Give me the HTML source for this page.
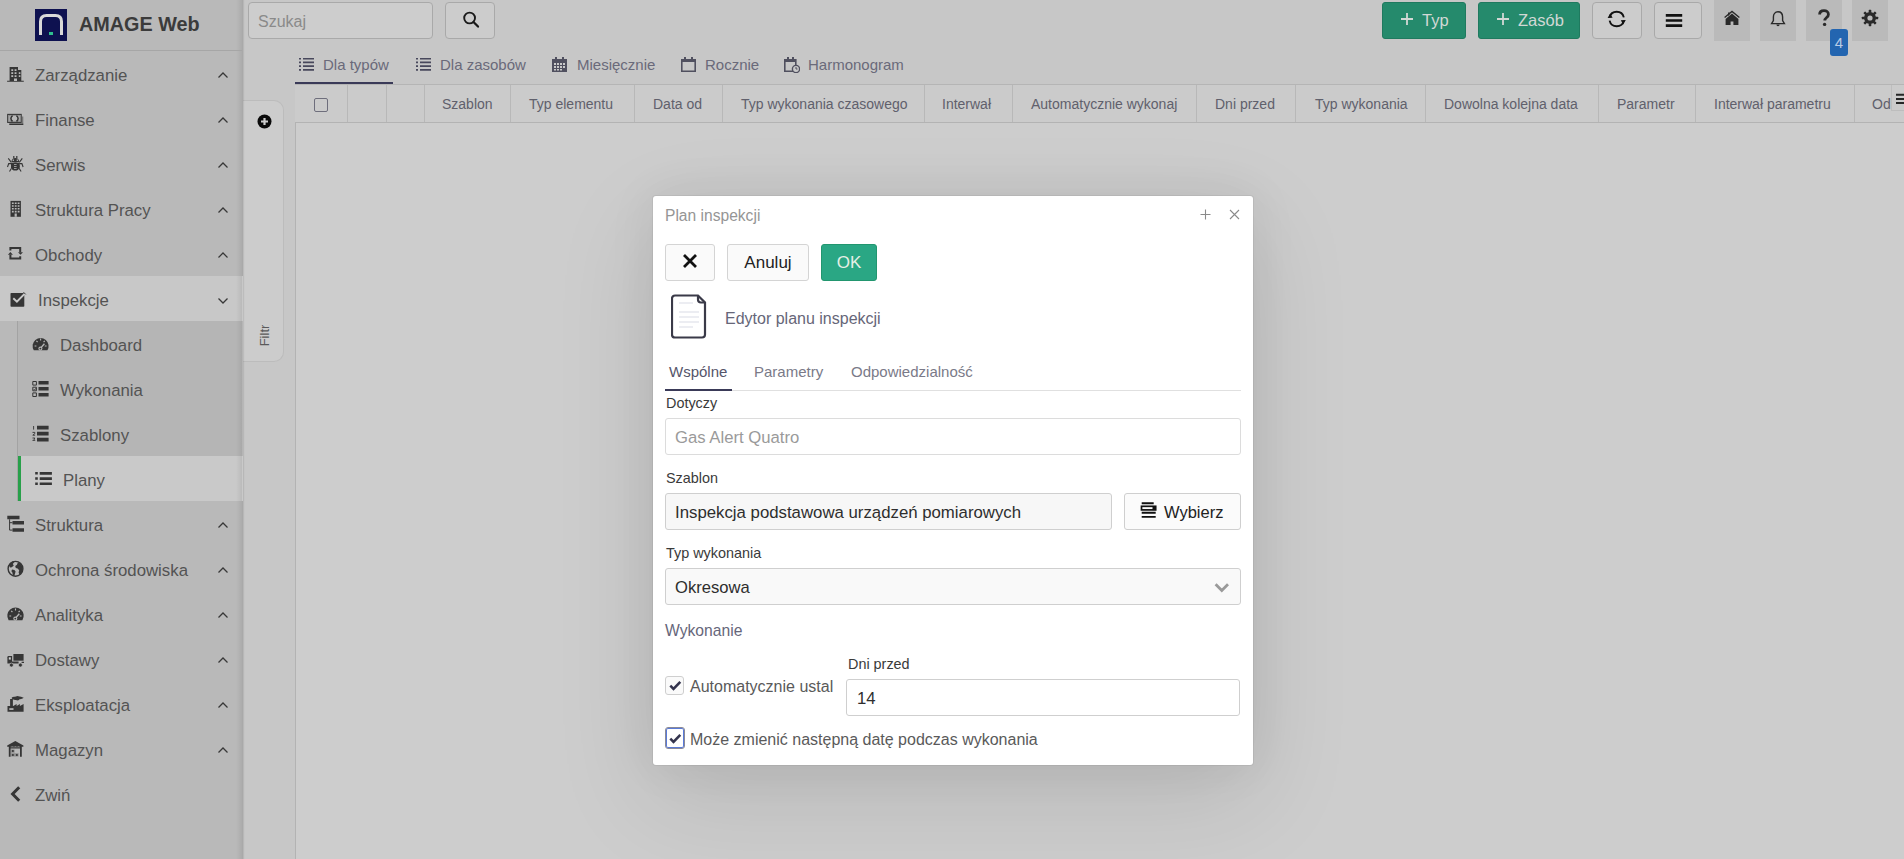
<!DOCTYPE html><html><head><meta charset="utf-8"><style>
*{box-sizing:border-box;margin:0;padding:0}
html,body{width:1904px;height:859px;overflow:hidden;background:#c7c7c7;font-family:"Liberation Sans",sans-serif;color:#444}
div,span,svg{position:absolute}
.n{white-space:nowrap}
</style></head><body>
<div style="left:248px;top:2px;width:185px;height:37px;border:1px solid #a9a9a9;border-radius:4px;background:#cdcdcd"></div>
<span class="n" style="left:258px;top:13px;font-size:16px;color:#8a8a8a">Szukaj</span>
<div style="left:445px;top:2px;width:50px;height:37px;border:1px solid #a9a9a9;border-radius:4px;background:#cccccc"><svg width="20" height="20" viewBox="0 0 20 20" style="left:16px;top:7px"><circle cx="7.6" cy="8" r="5.4" fill="none" stroke="#1a1a1a" stroke-width="1.9"/><path d="M11.5 12l4.5 4.6" stroke="#1a1a1a" stroke-width="2.2" stroke-linecap="round"/></svg></div>
<div style="left:1382px;top:2px;width:84px;height:37px;background:#258a6c;border:1px solid #1f7a5f;border-radius:3px"></div>
<svg width="12" height="12" viewBox="0 0 12 12" style="left:1401px;top:13px"><path d="M6 0v12M0 6h12" stroke="#d2d8d5" stroke-width="1.8"/></svg>
<span class="n" style="left:1422px;top:11px;font-size:16.5px;color:#d2d8d5">Typ</span>
<div style="left:1478px;top:2px;width:102px;height:37px;background:#258a6c;border:1px solid #1f7a5f;border-radius:3px"></div>
<svg width="12" height="12" viewBox="0 0 12 12" style="left:1497px;top:13px"><path d="M6 0v12M0 6h12" stroke="#d2d8d5" stroke-width="1.8"/></svg>
<span class="n" style="left:1518px;top:11px;font-size:16.5px;color:#d2d8d5">Zasób</span>
<div style="left:1592px;top:2px;width:50px;height:37px;border:1px solid #a9a9a9;border-radius:4px;background:#cccccc"></div>
<svg width="20" height="20" viewBox="0 0 20 20" style="left:1607px;top:9px"><path d="M2.6 8.4A7.3 7.3 0 0 1 16.8 8.4M16.8 11.6A7.3 7.3 0 0 1 2.6 11.6" fill="none" stroke="#111" stroke-width="1.9"/><path d="M0.6 9l2.6-4.4 2.4 4.2z M18.8 11l-2.6 4.4-2.4-4.2z" fill="#111"/></svg>
<div style="left:1654px;top:2px;width:48px;height:37px;border:1px solid #a9a9a9;border-radius:4px;background:#cccccc"><svg width="20" height="20" viewBox="0 0 20 20" style="left:10px;top:6px"><path d="M0.8 6.4h16.4M0.8 11.5h16.4M0.8 16.6h16.4" stroke="#111" stroke-width="2.6"/></svg></div>
<div style="left:1714px;top:0;width:36px;height:41px;background:#bababa"></div>
<div style="left:1760px;top:0;width:36px;height:41px;background:#bababa"></div>
<div style="left:1806px;top:0;width:36px;height:41px;background:#bababa"></div>
<div style="left:1852px;top:0;width:36px;height:41px;background:#bababa"></div>
<svg width="18" height="18" viewBox="0 0 18 18" style="left:1723px;top:9px"><path d="M1.6 8.6L9 2.4l7.4 6.2" fill="none" stroke="#2a2a2a" stroke-width="1.3"/><path d="M5 3.5h1.6v2.2L5 7z" fill="#2a2a2a"/><path d="M9 4.6l-6.4 5.3V16h5V12.6h2.8V16h5V9.9z" fill="#2a2a2a"/></svg>
<svg width="18" height="18" viewBox="0 0 18 18" style="left:1769px;top:10px"><path d="M9 1.8c-3 0-4.6 2.4-4.6 5.2v3.6L2.6 13.6h12.8L13.6 10.6V7c0-2.8-1.6-5.2-4.6-5.2z" fill="none" stroke="#2a2a2a" stroke-width="1.4"/><path d="M7.4 14.6a1.6 1.6 0 0 0 3.2 0z" fill="#2a2a2a"/></svg>
<svg width="14" height="18" viewBox="0 0 14 18" style="left:1817px;top:9px"><path d="M2.6 5.6C2.6 3 4.6 1.6 7 1.6s4.4 1.4 4.4 3.8c0 3.2-3.6 3-3.6 6.2" fill="none" stroke="#2a2a2a" stroke-width="2.8"/><circle cx="7.6" cy="15.4" r="1.7" fill="#2a2a2a"/></svg>
<svg width="18" height="18" viewBox="-9 -9 18 18" style="left:1861px;top:9px"><circle r="6" fill="#2a2a2a"/><rect x="-1.3" y="-8.2" width="2.6" height="3" rx=".6" fill="#2a2a2a" transform="rotate(0)"/><rect x="-1.3" y="-8.2" width="2.6" height="3" rx=".6" fill="#2a2a2a" transform="rotate(45)"/><rect x="-1.3" y="-8.2" width="2.6" height="3" rx=".6" fill="#2a2a2a" transform="rotate(90)"/><rect x="-1.3" y="-8.2" width="2.6" height="3" rx=".6" fill="#2a2a2a" transform="rotate(135)"/><rect x="-1.3" y="-8.2" width="2.6" height="3" rx=".6" fill="#2a2a2a" transform="rotate(180)"/><rect x="-1.3" y="-8.2" width="2.6" height="3" rx=".6" fill="#2a2a2a" transform="rotate(225)"/><rect x="-1.3" y="-8.2" width="2.6" height="3" rx=".6" fill="#2a2a2a" transform="rotate(270)"/><rect x="-1.3" y="-8.2" width="2.6" height="3" rx=".6" fill="#2a2a2a" transform="rotate(315)"/><circle r="2.6" fill="#bababa"/></svg>
<div style="left:1830px;top:29px;width:18px;height:27px;background:#2365b0;border-radius:3px"></div>
<span class="n" style="left:1830px;top:34px;width:18px;text-align:center;font-size:15px;color:#b9cce6">4</span>
<svg width="16" height="16" viewBox="0 0 16 16" style="left:299px;top:57px"><path d="M0 .9h2v1.7H0zM4 .9h11v1.7H4zM0 4.6h2v1.7H0zM4 4.6h11v1.7H4zM0 8.3h2v1.7H0zM4 8.3h11v1.7H4zM0 12h2v1.7H0zM4 12h11v1.7H4z" fill="#48485c"/></svg>
<span class="n" style="left:323px;top:56px;font-size:15px;color:#6a6a7a">Dla typów</span>
<svg width="16" height="16" viewBox="0 0 16 16" style="left:416px;top:57px"><path d="M0 .9h2v1.7H0zM4 .9h11v1.7H4zM0 4.6h2v1.7H0zM4 4.6h11v1.7H4zM0 8.3h2v1.7H0zM4 8.3h11v1.7H4zM0 12h2v1.7H0zM4 12h11v1.7H4z" fill="#48485c"/></svg>
<span class="n" style="left:440px;top:56px;font-size:15px;color:#6a6a7a">Dla zasobów</span>
<svg width="16" height="16" viewBox="0 0 16 16" style="left:552px;top:57px"><path d="M0 2h15v13H0z" fill="#50505f"/><path d="M3 0h2v3H3zM10 0h2v3h-2z" fill="#50505f"/><path d="M2 6h2v2H2zM5 6h2v2H5zM8 6h2v2H8zM11 6h2v2h-2zM2 9h2v2H2zM5 9h2v2H5zM8 9h2v2H8zM11 9h2v2h-2zM2 12h2v1.5H2zM5 12h2v1.5H5zM8 12h2v1.5H8z" fill="#c9c9c9"/></svg>
<span class="n" style="left:577px;top:56px;font-size:15px;color:#6a6a7a">Miesięcznie</span>
<svg width="16" height="16" viewBox="0 0 16 16" style="left:681px;top:57px"><path d="M0.8 2.8h13.4v11.4H0.8z" fill="none" stroke="#50505f" stroke-width="1.6"/><path d="M0 2h15v3H0z M3 0h2v3H3zM10 0h2v3h-2z" fill="#50505f"/></svg>
<span class="n" style="left:705px;top:56px;font-size:15px;color:#6a6a7a">Rocznie</span>
<svg width="16" height="16" viewBox="0 0 16 16" style="left:784px;top:57px"><path d="M0.8 2.8h11v11.4H0.8z" fill="none" stroke="#50505f" stroke-width="1.6"/><path d="M0 2h12v3H0z M3 0h2v3H3zM8 0h2v3H8z" fill="#50505f"/><circle cx="12" cy="12" r="3.6" fill="#c9c9c9" stroke="#50505f" stroke-width="1.4"/><path d="M12 10v2h1.5" fill="none" stroke="#50505f" stroke-width="1"/></svg>
<span class="n" style="left:808px;top:56px;font-size:15px;color:#6a6a7a">Harmonogram</span>
<div style="left:295px;top:82px;width:98px;height:2px;background:#3a3a58"></div>
<div style="left:243px;top:100px;width:41px;height:262px;background:#cccccc;border:1px solid #bcbcbc;border-left:none;border-radius:0 10px 10px 0"></div>
<svg width="15" height="15" viewBox="0 0 15 15" style="left:257px;top:114px"><circle cx="7.5" cy="7.5" r="7" fill="#0a0a0a"/><path d="M7.5 4v7M4 7.5h7" stroke="#cdcdcd" stroke-width="2.2"/></svg>
<span class="n" style="left:253.5px;top:327.5px;font-size:13px;color:#5a5a5a;transform:rotate(-90deg);transform-origin:center">Filtr</span>
<div style="left:295px;top:84px;width:1609px;height:775px;border-left:1px solid #b3b3b3;background:#cdcdcd"></div>
<div style="left:295px;top:84px;width:1609px;height:39px;border-top:1px solid #b5b5b5;border-bottom:1px solid #b3b3b3;background:#cbcbcb"></div>
<div style="left:347px;top:85px;width:1px;height:37px;background:#b8b8b8"></div>
<div style="left:386px;top:85px;width:1px;height:37px;background:#b8b8b8"></div>
<div style="left:424px;top:85px;width:1px;height:37px;background:#b8b8b8"></div>
<div style="left:510px;top:85px;width:1px;height:37px;background:#b8b8b8"></div>
<div style="left:634px;top:85px;width:1px;height:37px;background:#b8b8b8"></div>
<div style="left:722px;top:85px;width:1px;height:37px;background:#b8b8b8"></div>
<div style="left:924px;top:85px;width:1px;height:37px;background:#b8b8b8"></div>
<div style="left:1012px;top:85px;width:1px;height:37px;background:#b8b8b8"></div>
<div style="left:1196px;top:85px;width:1px;height:37px;background:#b8b8b8"></div>
<div style="left:1295px;top:85px;width:1px;height:37px;background:#b8b8b8"></div>
<div style="left:1425px;top:85px;width:1px;height:37px;background:#b8b8b8"></div>
<div style="left:1598px;top:85px;width:1px;height:37px;background:#b8b8b8"></div>
<div style="left:1695px;top:85px;width:1px;height:37px;background:#b8b8b8"></div>
<div style="left:1854px;top:85px;width:1px;height:37px;background:#b8b8b8"></div>
<div style="left:314px;top:98px;width:14px;height:14px;border:1.6px solid #6e6e7c;border-radius:2px"></div>
<span class="n" style="left:442px;top:96px;font-size:14px;color:#60606c">Szablon</span>
<span class="n" style="left:529px;top:96px;font-size:14px;color:#60606c">Typ elementu</span>
<span class="n" style="left:653px;top:96px;font-size:14px;color:#60606c">Data od</span>
<span class="n" style="left:741px;top:96px;font-size:14px;color:#60606c">Typ wykonania czasowego</span>
<span class="n" style="left:942px;top:96px;font-size:14px;color:#60606c">Interwał</span>
<span class="n" style="left:1031px;top:96px;font-size:14px;color:#60606c">Automatycznie wykonaj</span>
<span class="n" style="left:1215px;top:96px;font-size:14px;color:#60606c">Dni przed</span>
<span class="n" style="left:1315px;top:96px;font-size:14px;color:#60606c">Typ wykonania</span>
<span class="n" style="left:1444px;top:96px;font-size:14px;color:#60606c">Dowolna kolejna data</span>
<span class="n" style="left:1617px;top:96px;font-size:14px;color:#60606c">Parametr</span>
<span class="n" style="left:1714px;top:96px;font-size:14px;color:#60606c">Interwał parametru</span>
<span class="n" style="left:1872px;top:96px;font-size:14px;color:#60606c">Od</span>
<div style="left:1891px;top:85px;width:13px;height:26px;background:#cbcbcb;border-left:1px solid #bdbdbd;border-bottom:1px solid #bdbdbd"></div>
<svg width="9" height="12" viewBox="0 0 9 12" style="left:1896px;top:93px"><path d="M0 1.8h9M0 5.9h9M0 9.9h9" stroke="#262626" stroke-width="2"/></svg>
<div style="left:653px;top:196px;width:600px;height:569px;background:#fff;border-radius:3px;box-shadow:0 0 0 1px rgba(0,0,0,.05),0 32px 100px 4px rgba(0,0,0,.10),0 0 50px rgba(0,0,0,.07)"></div>
<span class="n" style="left:665px;top:207px;font-size:15.6px;color:#959595">Plan inspekcji</span>
<svg width="13" height="13" viewBox="0 0 13 13" style="left:1199px;top:208px"><path d="M6.5 1.5v10M1.5 6.5h10" stroke="#8a8a8a" stroke-width="1.1"/></svg>
<svg width="12" height="12" viewBox="0 0 12 12" style="left:1228px;top:207.5px"><path d="M2 2l9 9M11 2l-9 9" stroke="#8a8a8a" stroke-width="1.1"/></svg>
<div style="left:665px;top:244px;width:50px;height:37px;border:1px solid #d4d4d4;border-radius:3px;background:#fafafa"></div>
<svg width="16" height="16" viewBox="0 0 16 16" style="left:682px;top:253px"><path d="M2 2l12 12M14 2L2 14" stroke="#111" stroke-width="2.8"/></svg>
<div style="left:727px;top:244px;width:82px;height:37px;border:1px solid #d4d4d4;border-radius:3px;background:#fafafa"></div>
<span class="n" style="left:727px;top:253px;width:82px;text-align:center;font-size:17px;color:#222">Anuluj</span>
<div style="left:821px;top:244px;width:56px;height:37px;border:1px solid #22966f;border-radius:3px;background:#2aa784"></div>
<span class="n" style="left:821px;top:253px;width:56px;text-align:center;font-size:17px;color:#e6efe6">OK</span>
<svg width="36" height="46" viewBox="0 0 36 46" style="left:671px;top:294px"><path d="M4 1.5h23l7 7v32a3 3 0 0 1-3 3H4a3 3 0 0 1-3-3v-36a3 3 0 0 1 3-3z" fill="none" stroke="#3a3a48" stroke-width="2.2"/><path d="M27 1.5v4a3 3 0 0 0 3 3h4" fill="none" stroke="#3a3a48" stroke-width="2.2"/><path d="M8 9h14M8 18h20M8 23h20M8 28h20M8 33h14" stroke="#e6e8ee" stroke-width="1.6"/></svg>
<span class="n" style="left:725px;top:310px;font-size:16px;color:#666678">Edytor planu inspekcji</span>
<span class="n" style="left:669px;top:363px;font-size:15px;color:#55556a">Wspólne</span>
<span class="n" style="left:754px;top:363px;font-size:15px;color:#7a7a88">Parametry</span>
<span class="n" style="left:851px;top:363px;font-size:15px;color:#7a7a88">Odpowiedzialność</span>
<div style="left:665px;top:390px;width:576px;height:1px;background:#e0e0e0"></div>
<div style="left:665px;top:389px;width:67px;height:2px;background:#3a3a58"></div>
<span class="n" style="left:666px;top:395px;font-size:14.4px;color:#3a3a3a">Dotyczy</span>
<div style="left:665px;top:418px;width:576px;height:37px;border:1px solid #dcdcdc;border-radius:3px;background:#fff"></div>
<span class="n" style="left:675px;top:428px;font-size:16.7px;color:#9a9a9a">Gas Alert Quatro</span>
<span class="n" style="left:666px;top:470px;font-size:14.4px;color:#3a3a3a">Szablon</span>
<div style="left:665px;top:493px;width:447px;height:37px;border:1px solid #cfcfcf;border-radius:3px;background:#f7f7f7"></div>
<span class="n" style="left:675px;top:503px;font-size:16.8px;color:#2e2e2e">Inspekcja podstawowa urządzeń pomiarowych</span>
<div style="left:1124px;top:493px;width:117px;height:37px;border:1px solid #cfcfcf;border-radius:3px;background:#fbfbfb"></div>
<svg width="18" height="18" viewBox="0 0 18 18" style="left:1140px;top:501px"><path d="M1.7 2.2h12M1.7 11.8h14M1.7 15.9h14" stroke="#111" stroke-width="1.9"/><rect x="1.5" y="5.3" width="14.2" height="3.6" fill="none" stroke="#111" stroke-width="1.7"/><rect x="12.5" y="5.1" width="3.5" height="4" fill="#111"/></svg>
<span class="n" style="left:1164px;top:503px;font-size:16.5px;color:#222">Wybierz</span>
<span class="n" style="left:666px;top:545px;font-size:14.4px;color:#3a3a3a">Typ wykonania</span>
<div style="left:665px;top:568px;width:576px;height:37px;border:1px solid #cfcfcf;border-radius:3px;background:#f9f9f9"></div>
<span class="n" style="left:675px;top:578px;font-size:16.6px;color:#2e2e2e">Okresowa</span>
<svg width="16" height="12" viewBox="0 0 16 12" style="left:1214px;top:582px"><path d="M1.6 2.2l6.2 6.2 6.2-6.2" fill="none" stroke="#9a9a9a" stroke-width="2.8"/></svg>
<span class="n" style="left:665px;top:622px;font-size:15.7px;color:#66667a">Wykonanie</span>
<span class="n" style="left:848px;top:656px;font-size:14.4px;color:#3a3a3a">Dni przed</span>
<div style="left:846px;top:679px;width:394px;height:37px;border:1px solid #cfcfcf;border-radius:3px;background:#fff"></div>
<span class="n" style="left:857px;top:689px;font-size:16.7px;color:#2e2e2e">14</span>
<div style="left:665px;top:676px;width:19px;height:19px;border:1px solid #cfcfcf;border-radius:3px;background:#fafafa"></div>
<svg width="13" height="11" viewBox="0 0 13 11" style="left:669px;top:680px"><path d="M1.3 5.6l3.2 3.2 6.8-7" fill="none" stroke="#34344e" stroke-width="2.6"/></svg>
<span class="n" style="left:690px;top:678px;font-size:16px;color:#5a5a5a">Automatycznie ustal</span>
<div style="left:665px;top:727px;width:20px;height:22px;border:1px solid #8a8a96;border-radius:3px;background:#fff;box-shadow:inset 0 0 0 1px #5a7ad8"></div>
<svg width="13" height="11" viewBox="0 0 13 11" style="left:669px;top:733px"><path d="M1.3 5.6l3.2 3.2 6.8-7" fill="none" stroke="#34344e" stroke-width="2.6"/></svg>
<span class="n" style="left:690px;top:731px;font-size:16px;color:#5a5a5a">Może zmienić następną datę podczas wykonania</span>
<div style="left:0;top:0;width:243px;height:859px;background:#b9b9b9;border-right:1px solid #a9a9a9;box-shadow:1px 0 1px rgba(0,0,0,.08)"></div>
<svg width="32" height="32" viewBox="0 0 32 32" style="left:35px;top:9px"><rect width="32" height="32" fill="#0e1150"/><path d="M5.5 26 V12.5 Q5.5 6.5 11.5 6.5 H20.5 Q26.5 6.5 26.5 12.5 V26" fill="none" stroke="#d9d9d9" stroke-width="3"/><rect x="14" y="23" width="4" height="3" fill="#2fbf8f"/></svg>
<span class="n" style="left:79px;top:13px;font-size:19.8px;font-weight:bold;color:#3b3b3b">AMAGE Web</span>
<div style="left:0;top:50px;width:242px;height:1px;background:#a6a6a6"></div>
<div style="left:236px;top:0;width:6px;height:50px;background:linear-gradient(90deg,rgba(0,0,0,0),rgba(0,0,0,.07))"></div>
<div style="left:0;top:276px;width:243px;height:45px;background:#c8c8c8"></div>
<div style="left:18px;top:321px;width:225px;height:45px;background:#b5b5b5"></div>
<div style="left:17px;top:321px;width:1px;height:45px;background:#a3a3a3"></div>
<div style="left:18px;top:366px;width:225px;height:45px;background:#b5b5b5"></div>
<div style="left:17px;top:366px;width:1px;height:45px;background:#a3a3a3"></div>
<div style="left:18px;top:411px;width:225px;height:45px;background:#b5b5b5"></div>
<div style="left:17px;top:411px;width:1px;height:45px;background:#a3a3a3"></div>
<div style="left:18px;top:456px;width:225px;height:45px;background:#c9c9c9"></div>
<div style="left:18px;top:456px;width:3px;height:45px;background:#28a04a"></div>
<div style="left:17px;top:456px;width:1px;height:45px;background:#a3a3a3"></div>
<div style="left:236px;top:51px;width:6px;height:808px;background:linear-gradient(90deg,rgba(0,0,0,0),rgba(0,0,0,.07))"></div>
<svg width="243" height="859" viewBox="0 0 243 859" style="left:0;top:0"><path d="M9.6 67H18v3.1h3.3V80.7H23.8V81.8H7.1V80.7H9.6z" fill="#363636"/><path d="M11.3 69.3h1.9v1.8h-1.9zM14.6 69.3h1.9v1.8h-1.9zM11.3 72.3h1.9v1.8h-1.9zM14.6 72.3h1.9v1.8h-1.9zM11.3 75.3h1.9v1.8h-1.9zM14.6 75.3h1.9v1.8h-1.9zM18.8 72.3h1.6v1.8h-1.6zM18.8 75.3h1.6v1.8h-1.6zM14 78.6h3v2.3h-3z" fill="#b9b9b9"/><rect x="7.7" y="114.4" width="13.5" height="8" fill="none" stroke="#363636" stroke-width="1.1"/><rect x="9" y="115.6" width="11" height="5.6" fill="none" stroke="#7a7a7a" stroke-width=".6"/><path d="M12.6 115.8a3 3 0 0 0 0 5.4M16.4 115.8a3 3 0 0 1 0 5.4" fill="none" stroke="#363636" stroke-width="1.6"/><path d="M22 116.5h1.3v8H9.3v-1.2H22z" fill="#777"/><path d="M9.3 123.8h14v1.1h-14z" fill="#363636"/><ellipse cx="15.3" cy="166.6" rx="4.3" ry="4" fill="#363636"/><rect x="11" y="162.9" width="8.6" height="5" fill="#363636"/><path d="M11.5 162.3q0-4.2 3.8-4.2t3.8 4.2z" fill="#363636"/><path d="M13.2 155.9h1.2v2.4h-1.2zM16.2 155.9h1.2v2.4h-1.2z" fill="#363636"/><path d="M12.7 159.5h1.2v1.5h-1.2zM16.7 159.5h1.2v1.5h-1.2z" fill="#b9b9b9"/><path d="M14 164.2h2.6v.9H14zM14 166.2h2.6v.9H14zM14 168.2h2.6v.9H14z" fill="#b9b9b9"/><path d="M8.3 158.3l3 4M22.3 158.3l-3 4M7.5 167l1.2-3.4h2.6M23.1 167l-1.2-3.4h-2.6M9.5 171.5l2-3.3M21.1 171.5l-2-3.3" fill="none" stroke="#363636" stroke-width="1.1"/><path d="M10.5 200.9h10.4v15.9H10.5z" fill="#363636"/><path d="M11.9 202.4h1.8v1.6h-1.8zM14.8 202.4h1.8v1.6h-1.8zM17.7 202.4h1.8v1.6h-1.8zM11.9 205.2h1.8v1.6h-1.8zM14.8 205.2h1.8v1.6h-1.8zM17.7 205.2h1.8v1.6h-1.8zM11.9 208h1.8v1.6h-1.8zM14.8 208h1.8v1.6h-1.8zM17.7 208h1.8v1.6h-1.8zM11.9 210.8h1.8v1.6h-1.8zM14.8 210.8h1.8v1.6h-1.8zM17.7 210.8h1.8v1.6h-1.8zM14.6 213.6h2.2v3.2h-2.2z" fill="#b9b9b9"/><path d="M10.4 250.6V248.1H20.2V252.2M10.4 254.7V258.6H20.2V256.2" fill="none" stroke="#363636" stroke-width="2"/><path d="M7.9 254.7L10.4 252L12.9 254.7zM18 252.2h5l-2.5 2.5z" fill="#363636"/><rect x="10.5" y="293" width="13.8" height="13.7" rx=".8" fill="#363636"/><path d="M13.3 298.3l3.6 3.4 8.4-8.6" fill="none" stroke="#c9c9c9" stroke-width="2"/><path d="M23.5 292.2l2.2 2.2" stroke="#363636" stroke-width="1"/><path d="M33.8 350.2A8 8 0 1 1 47.4 350.2z" fill="#363636"/><path d="M34.6 346h1.8M44.8 346h1.8M36.4 340.8l1.2 1.2M44.8 340.8l-1.2 1.2M40.6 338.6v1.8" stroke="#b5b5b5" stroke-width="1.1"/><path d="M40.4 348.4l4-4.6" stroke="#b5b5b5" stroke-width="1.4"/><circle cx="40.4" cy="348.6" r="1.5" fill="#363636" stroke="#b5b5b5" stroke-width="1.1"/><path d="M32.8 381.5h3.6v3.6h-3.6zM32.8 387.2h3.6v3.6h-3.6zM32.8 392.9h3.6v3.6h-3.6z" fill="none" stroke="#363636" stroke-width="1"/><path d="M38.5 381h10.1v3.6H38.5zM38.5 387h10.1v3.6H38.5zM38.5 393h10.1v3.6H38.5z" fill="#363636"/><path d="M33.6 389l1 1 1.6-2" fill="none" stroke="#363636" stroke-width=".8"/><path d="M37 425.8h11.6v3.6H37zM37 431.8h11.6v3.6H37zM37 437.8h11.6v3.6H37z" fill="#363636"/><path d="M33.6 426v3.6M32.5 432.4h2.3v1.2l-2 1.6h2.3M32.5 438h2.3l-.8 1.2.9 1.2h-2.4" fill="none" stroke="#363636" stroke-width=".9"/><path d="M35.2 472h2.6v2.6h-2.6zM35.2 477.2h2.6v2.6h-2.6zM35.2 482.4h2.6v2.6h-2.6z" fill="#363636"/><path d="M39.7 472h12.2v2.7H39.7zM39.7 477.2h12.2v2.7H39.7zM39.7 482.4h12.2v2.7H39.7z" fill="#363636"/><path d="M7.3 515.8h12.2v3.5H7.3zM12.5 521h11.5v3.5H12.5zM12.5 528.3h11.5v3.5H12.5z" fill="#363636"/><path d="M9.6 519.3v10.8h2.9M9.6 522.7h2.9" fill="none" stroke="#363636" stroke-width="1"/><circle cx="15.5" cy="568.8" r="7.4" fill="none" stroke="#363636" stroke-width="1.4"/><path d="M9 565.5c.8-2.2 2.5-3.8 4.6-4.4l.6 1.2-1.4 1.6 1 1.6-2 1.8-1.6.2z" fill="#363636"/><path d="M18.2 562.2c2.6 1 4.6 3.6 4.6 6.6 0 2.6-1.2 4.8-3.2 6.2l-1-2.4.6-2.4-1.6-1.8-1.8-.4-.6-2 1.8-1.2.6-1.8z" fill="#363636"/><path d="M12 569.4l2.4.6 1.2 1.6-.6 2.2-1 2.6-1.2-1.4-.4-2.4-1-1.4z" fill="#363636"/><path d="M8.6 620.2A8.2 8.2 0 1 1 22.4 620.2z" fill="#363636"/><path d="M9.4 616h1.8M19.8 616h1.8M11.2 610.8l1.2 1.2M19.8 610.8l-1.2 1.2M15.5 608.6v1.8" stroke="#b9b9b9" stroke-width="1.1"/><path d="M15.3 618.4l4-4.6" stroke="#b9b9b9" stroke-width="1.4"/><circle cx="15.3" cy="618.6" r="1.5" fill="#363636" stroke="#b9b9b9" stroke-width="1.1"/><path d="M13.4 654h10.2v6.7H13.4z" fill="#363636"/><path d="M7.4 657.2q0-1.1 1.1-1.1h3.6v7.5H7.4z" fill="#363636"/><path d="M8.8 657.3h2v2.3h-2z" fill="#cfcfcf"/><path d="M12 661.6h6.6v2H12zM21.6 661.8h2.4v1.2h-2.4z" fill="#363636"/><circle cx="11.4" cy="665.1" r="2" fill="#363636" stroke="#b9b9b9" stroke-width=".7"/><circle cx="20.4" cy="665.1" r="2" fill="#363636" stroke="#b9b9b9" stroke-width=".7"/><path d="M7.5 706.1h5.8l3.3-2 0 2 3.3-2 0 2 3.7-2v7.6H7.5z" fill="#363636"/><path d="M10.1 699h2.8v7.2h-2.8z" fill="#363636"/><path d="M11.8 697.5c1.5-1.2 3-.6 4-1 1.2-.8 2.6-.6 3.5 0 1.4-.3 3.2.6 4.5 1.3-1.2.9-2.8 1.6-4.3 1.4-.8 1.2-2.3 1.6-3.5.7-1.5.5-3.2-.3-4.2-1.3z" fill="#363636"/><path d="M9.3 708.2h4.2v1.7H9.3z" fill="#b9b9b9"/><path d="M7.2 745.6l8.1-4.6 8.1 4.6v1.2H7.2z" fill="#363636"/><path d="M8.8 746h1.8v10.8H8.8zM20 746h1.8v10.8H20zM10.5 747.3h9.5v1.3h-9.5z" fill="#363636"/><path d="M11 749.5h3.6v3.2H11zM11 753.2h7.6v3.3H11z" fill="#8c8c8c"/><circle cx="12.9" cy="751" r="1" fill="#363636"/><circle cx="12.9" cy="754.9" r="1" fill="#363636"/><circle cx="16.9" cy="754.9" r="1" fill="#363636"/><path d="M11.6 746.4h1.2v.6h-1.2zM14.8 746.4h1.2v.6h-1.2zM17.9 746.4h1.2v.6h-1.2z" fill="#9a9a9a"/><path d="M19.2 787.2L12.6 794l6.6 6.8" fill="none" stroke="#363636" stroke-width="3"/></svg>
<span class="n" style="left:35px;top:66px;font-size:16.8px;color:#535353">Zarządzanie</span>
<svg width="12" height="8" viewBox="0 0 12 8" style="left:217px;top:71px"><path d="M1.5 6.5l4.5-4.5 4.5 4.5" fill="none" stroke="#383838" stroke-width="1.25"/></svg>
<span class="n" style="left:35px;top:111px;font-size:16.8px;color:#535353">Finanse</span>
<svg width="12" height="8" viewBox="0 0 12 8" style="left:217px;top:116px"><path d="M1.5 6.5l4.5-4.5 4.5 4.5" fill="none" stroke="#383838" stroke-width="1.25"/></svg>
<span class="n" style="left:35px;top:156px;font-size:16.8px;color:#535353">Serwis</span>
<svg width="12" height="8" viewBox="0 0 12 8" style="left:217px;top:161px"><path d="M1.5 6.5l4.5-4.5 4.5 4.5" fill="none" stroke="#383838" stroke-width="1.25"/></svg>
<span class="n" style="left:35px;top:201px;font-size:16.8px;color:#535353">Struktura Pracy</span>
<svg width="12" height="8" viewBox="0 0 12 8" style="left:217px;top:206px"><path d="M1.5 6.5l4.5-4.5 4.5 4.5" fill="none" stroke="#383838" stroke-width="1.25"/></svg>
<span class="n" style="left:35px;top:246px;font-size:16.8px;color:#535353">Obchody</span>
<svg width="12" height="8" viewBox="0 0 12 8" style="left:217px;top:251px"><path d="M1.5 6.5l4.5-4.5 4.5 4.5" fill="none" stroke="#383838" stroke-width="1.25"/></svg>
<span class="n" style="left:38px;top:291px;font-size:16.8px;color:#535353">Inspekcje</span>
<svg width="12" height="8" viewBox="0 0 12 8" style="left:217px;top:297px"><path d="M1.5 1.5l4.5 4.5 4.5-4.5" fill="none" stroke="#383838" stroke-width="1.25"/></svg>
<span class="n" style="left:60px;top:336px;font-size:16.8px;color:#535353">Dashboard</span>
<span class="n" style="left:60px;top:381px;font-size:16.8px;color:#535353">Wykonania</span>
<span class="n" style="left:60px;top:426px;font-size:16.8px;color:#535353">Szablony</span>
<span class="n" style="left:63px;top:471px;font-size:16.8px;color:#535353">Plany</span>
<span class="n" style="left:35px;top:516px;font-size:16.8px;color:#535353">Struktura</span>
<svg width="12" height="8" viewBox="0 0 12 8" style="left:217px;top:521px"><path d="M1.5 6.5l4.5-4.5 4.5 4.5" fill="none" stroke="#383838" stroke-width="1.25"/></svg>
<span class="n" style="left:35px;top:561px;font-size:16.8px;color:#535353">Ochrona środowiska</span>
<svg width="12" height="8" viewBox="0 0 12 8" style="left:217px;top:566px"><path d="M1.5 6.5l4.5-4.5 4.5 4.5" fill="none" stroke="#383838" stroke-width="1.25"/></svg>
<span class="n" style="left:35px;top:606px;font-size:16.8px;color:#535353">Analityka</span>
<svg width="12" height="8" viewBox="0 0 12 8" style="left:217px;top:611px"><path d="M1.5 6.5l4.5-4.5 4.5 4.5" fill="none" stroke="#383838" stroke-width="1.25"/></svg>
<span class="n" style="left:35px;top:651px;font-size:16.8px;color:#535353">Dostawy</span>
<svg width="12" height="8" viewBox="0 0 12 8" style="left:217px;top:656px"><path d="M1.5 6.5l4.5-4.5 4.5 4.5" fill="none" stroke="#383838" stroke-width="1.25"/></svg>
<span class="n" style="left:35px;top:696px;font-size:16.8px;color:#535353">Eksploatacja</span>
<svg width="12" height="8" viewBox="0 0 12 8" style="left:217px;top:701px"><path d="M1.5 6.5l4.5-4.5 4.5 4.5" fill="none" stroke="#383838" stroke-width="1.25"/></svg>
<span class="n" style="left:35px;top:741px;font-size:16.8px;color:#535353">Magazyn</span>
<svg width="12" height="8" viewBox="0 0 12 8" style="left:217px;top:746px"><path d="M1.5 6.5l4.5-4.5 4.5 4.5" fill="none" stroke="#383838" stroke-width="1.25"/></svg>
<span class="n" style="left:35px;top:786px;font-size:16.8px;color:#535353">Zwiń</span>
</body></html>
